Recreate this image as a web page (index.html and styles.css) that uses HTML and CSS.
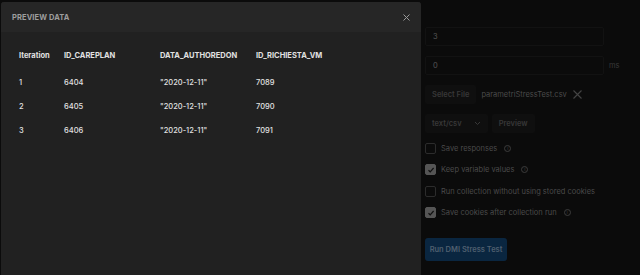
FILE: index.html
```html
<!DOCTYPE html>
<html>
<head>
<meta charset="utf-8">
<link rel="stylesheet" href="styles.css">
</head>
<body>
<div class="page">
  <div class="modal">
    <div class="modal-head">
      <span class="modal-title">PREVIEW DATA</span>
      <svg class="close" width="7" height="7" viewBox="0 0 7 7"><path d="M0.5 0.5L6.5 6.5M6.5 0.5L0.5 6.5" stroke="#9a9a9a" stroke-width="1"/></svg>
    </div>
    <div class="modal-body">
      <div class="grid">
        <div class="th">Iteration</div><div class="th">ID_CAREPLAN</div><div class="th">DATA_AUTHOREDON</div><div class="th">ID_RICHIESTA_VM</div>
        <div class="td">1</div><div class="td">6404</div><div class="td">"2020-12-11"</div><div class="td">7089</div>
        <div class="td">2</div><div class="td">6405</div><div class="td">"2020-12-11"</div><div class="td">7090</div>
        <div class="td">3</div><div class="td">6406</div><div class="td">"2020-12-11"</div><div class="td">7091</div>
      </div>
    </div>
  </div>
  <div class="panel">
    <div class="row"><div class="input">3</div></div>
    <div class="row"><div class="input">0</div><span class="unit">ms</span></div>
    <div class="row files">
      <div class="btn">Select File</div>
      <span class="fname">parametriStressTest.csv</span>
      <svg class="fx" width="9" height="9" viewBox="0 0 9 9"><path d="M0.5 0.5L8.5 8.5M8.5 0.5L0.5 8.5" stroke="#444" stroke-width="1.1"/></svg>
    </div>
    <div class="row files">
      <div class="btn select">text/csv <svg width="7" height="5" viewBox="0 0 7 5"><path d="M1 1L3.5 3.5L6 1" fill="none" stroke="#383838" stroke-width="1"/></svg></div>
      <div class="btn">Preview</div>
    </div>
    <div class="checks">
      <div class="check"><span class="box"></span><span>Save responses</span><span class="info">i</span></div>
      <div class="check"><span class="box on"><svg width="8" height="8" viewBox="0 0 8 8"><path d="M1.5 4.2L3.2 5.8L6.6 2" fill="none" stroke="#111" stroke-width="1.2"/></svg></span><span>Keep variable values</span><span class="info">i</span></div>
      <div class="check"><span class="box"></span><span>Run collection without using stored cookies</span></div>
      <div class="check"><span class="box on"><svg width="8" height="8" viewBox="0 0 8 8"><path d="M1.5 4.2L3.2 5.8L6.6 2" fill="none" stroke="#111" stroke-width="1.2"/></svg></span><span>Save cookies after collection run</span><span class="info">i</span></div>
    </div>
    <div class="run">Run DMI Stress Test</div>
  </div>
</div>
</body>
</html>
```
FILE: styles.css
```css
html, body { margin: 0; padding: 0; }
body {
  width: 640px; height: 275px; overflow: hidden;
  background: #0b0b0b;
  font-family: Inter, "Noto Sans", sans-serif;
}
.page { display: flex; height: 275px; }
.modal {
  width: 420px; margin: 2px 0 0 1px;
  background: #212121;
  border-radius: 3px 3px 0 0;
  display: flex; flex-direction: column;
  flex-shrink: 0;
}
.modal-head {
  height: 30px; background: #262626;
  border-radius: 3px 3px 0 0;
  display: flex; align-items: center; justify-content: space-between;
  padding: 0 11px 0 11px;
}
.modal-title { font-size: 7.5px; font-weight: 700; color: #9d9d9d; letter-spacing: 0.1px; }
.close { margin-top: 1px; }
.modal-body { padding: 19px 0 0 18px; }
.grid {
  display: grid;
  grid-template-columns: 45px 96px 96px 96px;
  grid-template-rows: 27px 24px 24px 24px;
  font-size: 7.5px; color: #e2e2e2;
}
.th { font-weight: 700; line-height: 10px; }
.td { font-weight: 500; line-height: 10px; }

.panel {
  flex: 1; padding: 27px 0 0 4px;
  font-size: 7.5px; color: #4a4a4a;
}
.row { display: flex; align-items: center; margin-bottom: 10px; }
.input {
  width: 170px; height: 17px; border: 1px solid #121212; border-radius: 2px;
  background: #0b0b0b; padding-left: 7px; line-height: 17px; color: #555;
}
.unit { margin-left: 5px; color: #3a3a3a; }
.btn {
  height: 19px; background: #0f0f0f; border-radius: 2px;
  padding: 0 7px; display: flex; align-items: center; gap: 12px;
  color: #383838; font-weight: 600;
}
.select { margin-right: 4px; }
.fname { margin-left: 5px; color: #4a4a4a; }
.fx { margin-left: 6px; }
.checks { margin-top: 1px; display: flex; flex-direction: column; gap: 11.5px; }
.check { display: flex; align-items: center; height: 10px; gap: 5px; color: #4a4a4a; }
.box {
  width: 9px; height: 9px; border: 1px solid #2c2c2c; border-radius: 2px;
  display: flex; align-items: center; justify-content: center;
}
.box.on { background: #555; border-color: #555; }
.info {
  width: 5px; height: 5px; border: 1px solid #3c3c3c; border-radius: 50%;
  font-size: 5px; line-height: 5px; text-align: center; color: #3c3c3c; margin-left: 2px;
}
.run {
  margin-top: 20px; width: 82px; height: 23px; background: #0a2640;
  border-radius: 3px; color: #4f5f6f; font-weight: 600;
  display: flex; align-items: center; justify-content: center;
}
```
